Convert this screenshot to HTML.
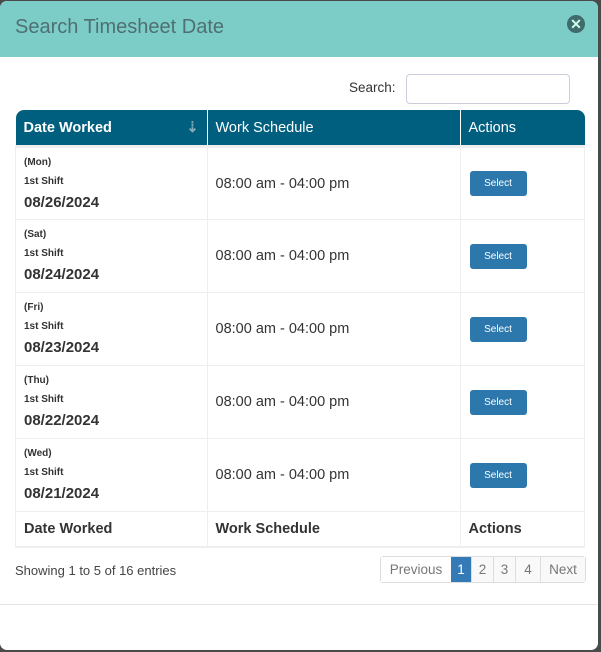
<!DOCTYPE html>
<html><head><style>
body{margin:0;width:601px;height:652px;background:#4a4a4a;font-family:"Liberation Sans",sans-serif;overflow:hidden;position:relative}
.modal{position:absolute;left:0;top:1px;width:598px;height:649px;background:#fff;border-radius:7px;overflow:hidden}
.hd{height:56px;background:#7ccdc8;position:relative}
.hd h1{margin:0;position:absolute;left:15px;top:15px;font-size:20px;letter-spacing:0px;font-weight:normal;color:#4f6f72}
.x{position:absolute;left:567px;top:14px;width:18px;height:18px;border-radius:50%;background:#3f6b6b;color:#cfe;font-size:14px;line-height:18px;text-align:center;font-weight:bold}
.lbl{position:absolute;left:349px;top:79px;font-size:13.5px;color:#333}
.inp{position:absolute;left:406px;top:73px;width:162px;height:28px;border:1px solid #ccd;border-radius:4px}
table{position:absolute;left:15px;top:109px;width:570px;border-collapse:collapse;font-size:14.5px;color:#333}
th{background:#005f7f;color:#fff;text-align:left;height:35px;padding:0 8px;font-size:14.5px;font-weight:normal;border-right:1px solid #fff}
th:first-child{border-top-left-radius:8px;font-weight:bold}
th:last-child{border-top-right-radius:8px;border-right:none}
td{border:1px solid #eee;padding:0 8px;vertical-align:middle}
tbody tr{height:73px}
tbody tr:first-child td{border-top:3px solid #eee}
.s{font-size:10px;font-weight:bold;line-height:19px}
.d{font-size:15px;font-weight:bold;line-height:24px}
.btn{display:inline-block;background:#2c78ad;color:#fff;font-size:10px;padding:0;width:57px;height:25px;line-height:25px;text-align:center;border-radius:3px;margin-left:1px}
tfoot td{height:34px;font-weight:bold;font-size:14.5px;border-bottom:2px solid #eee}
.info{position:absolute;left:15px;top:562px;font-size:13px;color:#444}
.pg{position:absolute;left:380px;top:555px;display:flex;border:1px solid #ddd;border-radius:3px;height:25px;font-size:13.5px;color:#777}
.pg span{line-height:25px;border-left:1px solid #ddd;background:#f9f9f9;text-align:center}
.pg span:first-child{border-left:none;background:#fff}
.pg .a{background:#337ab7;color:#fff;border-left:none}
.line{position:absolute;left:0;top:603px;width:598px;border-top:1px solid #e5e5e5}
</style></head><body>
<div class="modal">
<div class="hd"><h1>Search Timesheet Date</h1><div class="x">✕</div></div>
<div class="lbl">Search:</div><div class="inp"></div>
<table>
<thead><tr><th style="width:175px">Date Worked <span style="float:right;color:#8ab">⇣</span></th><th style="width:236px">Work Schedule</th><th>Actions</th></tr></thead>
<tbody>
<tr><td><div class="s">(Mon)</div><div class="s">1st Shift</div><div class="d">08/26/2024</div></td><td>08:00 am - 04:00 pm</td><td><span class="btn">Select</span></td></tr>
<tr><td><div class="s">(Sat)</div><div class="s">1st Shift</div><div class="d">08/24/2024</div></td><td>08:00 am - 04:00 pm</td><td><span class="btn">Select</span></td></tr>
<tr><td><div class="s">(Fri)</div><div class="s">1st Shift</div><div class="d">08/23/2024</div></td><td>08:00 am - 04:00 pm</td><td><span class="btn">Select</span></td></tr>
<tr><td><div class="s">(Thu)</div><div class="s">1st Shift</div><div class="d">08/22/2024</div></td><td>08:00 am - 04:00 pm</td><td><span class="btn">Select</span></td></tr>
<tr><td><div class="s">(Wed)</div><div class="s">1st Shift</div><div class="d">08/21/2024</div></td><td>08:00 am - 04:00 pm</td><td><span class="btn">Select</span></td></tr>
</tbody>
<tfoot><tr><td>Date Worked</td><td>Work Schedule</td><td>Actions</td></tr></tfoot>
</table>
<div class="info">Showing 1 to 5 of 16 entries</div>
<div class="pg"><span style="width:70px">Previous</span><span class="a" style="width:20px">1</span><span style="width:21px">2</span><span style="width:21px">3</span><span style="width:24px">4</span><span style="width:44px">Next</span></div>
<div class="line"></div>
</div>
</body></html>
